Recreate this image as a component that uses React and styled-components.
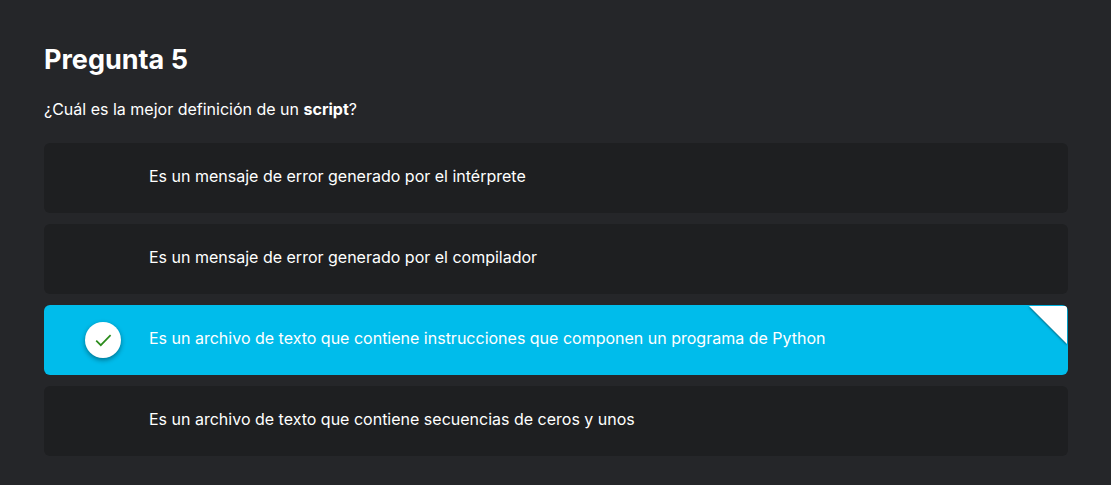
import React, { useState } from "react";
import styled, { createGlobalStyle } from "styled-components";

const GlobalStyle = createGlobalStyle`
  * { box-sizing: border-box; }
  body {
    margin: 0;
    background: #252629;
    color: #fff;
    font-family: Inter, "Liberation Sans", sans-serif;
    font-size: 16px;
    line-height: 24px;
  }
`;

const Page = styled.main`
  padding: 40px 43px 24px 44px;
`;

const Title = styled.h1`
  margin: 0;
  font-size: 27px;
  line-height: 40px;
  font-weight: 700;
`;

const Options = styled.fieldset`
  margin: 0;
  padding: 0;
  border: 0;
  min-width: 0;
`;

const Question = styled.legend`
  padding: 17px 0 22px;
`;

const OptionList = styled.div`
  display: grid;
  gap: 11px;
`;

const Option = styled.label`
  position: relative;
  display: flex;
  align-items: center;
  min-height: 70px;
  padding: 0 41px;
  border-radius: 6px;
  overflow: hidden;
  cursor: pointer;
  background: ${(p) => (p.$selected ? "#00bceb" : "#1e1f21")};
`;

const Radio = styled.input`
  appearance: none;
  position: absolute;
  inset: 0;
  margin: 0;
  cursor: pointer;
`;

const Mark = styled.span`
  flex: none;
  display: grid;
  place-items: center;
  width: 36px;
  height: 36px;
  margin-right: 28px;
  border-radius: 50%;
  background: ${(p) => (p.$selected ? "#fff" : "transparent")};
  box-shadow: ${(p) => (p.$selected ? "0 2px 5px rgba(0, 0, 0, 0.4)" : "none")};
`;

const OptionText = styled.span`
  padding-bottom: 5px;
`;

const Corner = styled.svg`
  position: absolute;
  top: 1px;
  right: 1px;
  overflow: visible;
  filter: drop-shadow(0 1px 1px rgba(0, 0, 0, 0.5));
`;

const answers = [
  "Es un mensaje de error generado por el intérprete",
  "Es un mensaje de error generado por el compilador",
  "Es un archivo de texto que contiene instrucciones que componen un programa de Python",
  "Es un archivo de texto que contiene secuencias de ceros y unos",
];

export default function App() {
  const [selected, setSelected] = useState(2);
  return (
    <Page>
      <GlobalStyle />
      <Title>Pregunta 5</Title>
      <Options>
        <Question>
          ¿Cuál es la mejor definición de un <strong>script</strong>?
        </Question>
        <OptionList>
          {answers.map((answer, i) => (
            <Option key={answer} $selected={i === selected}>
              <Radio
                type="radio"
                name="answer"
                checked={i === selected}
                onChange={() => setSelected(i)}
              />
              <Mark $selected={i === selected}>
                {i === selected && (
                  <svg width="18" height="18" viewBox="0 0 18 18" fill="none" aria-hidden="true">
                    <path d="M2.2 9.7L6.8 14.2L16.6 4.2" stroke="#2c8c1c" strokeWidth="1.7" />
                  </svg>
                )}
              </Mark>
              <OptionText>{answer}</OptionText>
              {i === selected && (
                <Corner width="38" height="38" viewBox="0 0 38 38" aria-hidden="true">
                  <path d="M0 0H38V38Z" fill="#fff" />
                </Corner>
              )}
            </Option>
          ))}
        </OptionList>
      </Options>
    </Page>
  );
}
